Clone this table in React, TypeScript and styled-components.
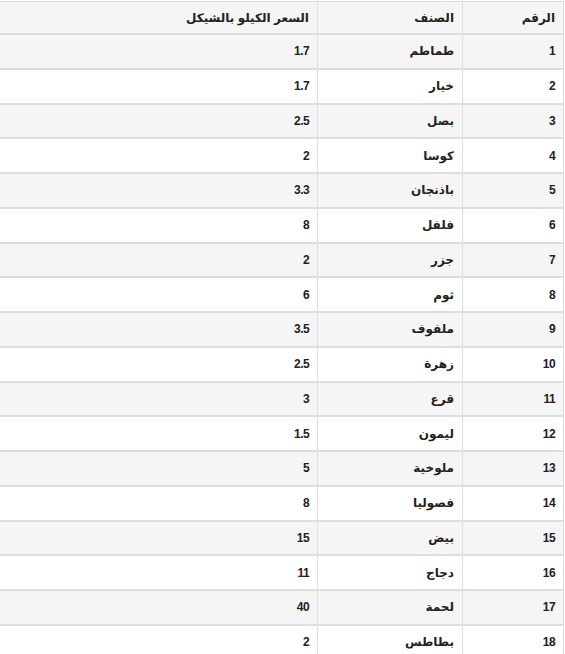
import styled, { createGlobalStyle } from "styled-components";

const GlobalStyle = createGlobalStyle`
	html, body {
		margin: 0;
		padding: 0;
		background: #fff;
		overflow: hidden;
	}

	body {
		font-family: "Liberation Sans", "DejaVu Sans", Arial, sans-serif;
	}
`;

const prices: [string, string][] = [
	["طماطم", "1.7"],
	["خيار", "1.7"],
	["بصل", "2.5"],
	["كوسا", "2"],
	["باذنجان", "3.3"],
	["فلفل", "8"],
	["جزر", "2"],
	["ثوم", "6"],
	["ملفوف", "3.5"],
	["زهرة", "2.5"],
	["قرع", "3"],
	["ليمون", "1.5"],
	["ملوخية", "5"],
	["فصوليا", "8"],
	["بيض", "15"],
	["دجاج", "11"],
	["لحمة", "40"],
	["بطاطس", "2"],
];

const App = () => {
	return (
		<>
			<GlobalStyle />
			<Page>
				<PriceTable>
					<colgroup>
						<col style={{ width: 101 }} />
						<col style={{ width: 145 }} />
						<col />
					</colgroup>
					<thead>
						<HeadRow>
							<HeadCell>الرقم</HeadCell>
							<HeadCell>الصنف</HeadCell>
							<HeadCell>السعر الكيلو بالشيكل</HeadCell>
						</HeadRow>
					</thead>
					<tbody>
						{prices.map((item, idx) => (
							<Row key={`price${idx}`} $striped={idx % 2 === 0}>
								<NumCell>{idx + 1}</NumCell>
								<Cell>{item[0]}</Cell>
								<NumCell>{item[1]}</NumCell>
							</Row>
						))}
					</tbody>
				</PriceTable>
			</Page>
		</>
	);
};

const Page = styled.div`
	direction: rtl;
	width: 565px;
	height: 654px;
	overflow: hidden;
	padding: 1px 1px 0 0;
	box-sizing: border-box;
`;

const PriceTable = styled.table`
	width: 760px;
	table-layout: fixed;
	border-collapse: collapse;
	border-spacing: 0;
	font-size: 12px;
	font-weight: bold;
	color: #222;
`;

const HeadRow = styled.tr`
	height: 32.5px;
	background: #f5f5f5;
`;

const Row = styled.tr<{ $striped?: boolean }>`
	height: 34.75px;
	background: ${({ $striped }) => ($striped ? "#f5f5f5" : "#fff")};
`;

const Cell = styled.td`
	padding: 0 8px;
	text-align: right;
	vertical-align: middle;
	border: 1px solid #dedede;
	border-top-width: 2px;
	border-bottom-width: 2px;
	white-space: nowrap;
`;

const NumCell = styled(Cell)`
	letter-spacing: -0.6px;
`;

const HeadCell = styled.th`
	padding: 0 8px;
	text-align: right;
	vertical-align: middle;
	font-weight: bold;
	border: 1px solid #dedede;
	border-bottom-width: 2px;
	white-space: nowrap;
`;

export default App;
